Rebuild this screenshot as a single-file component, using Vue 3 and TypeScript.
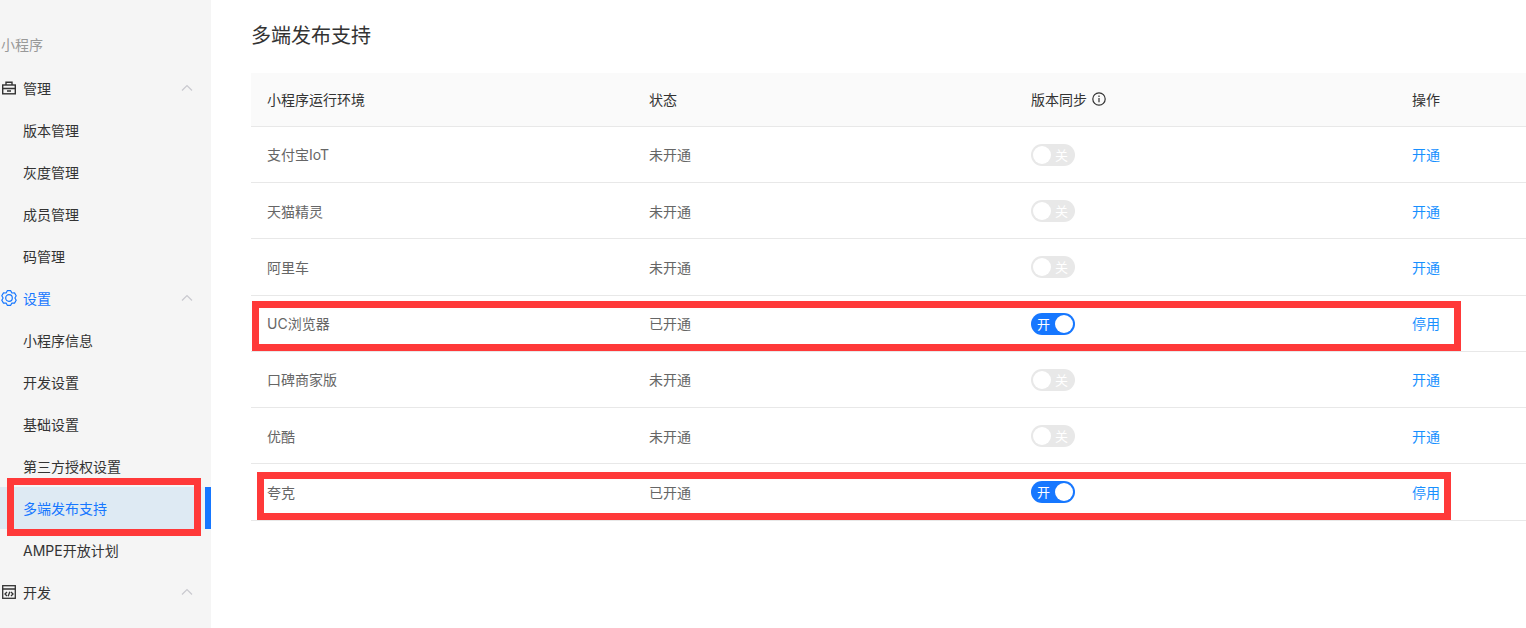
<template>
  <div class="page">
    <aside class="side">
      <div class="brand">小程序</div>
      <template v-for="g in groups" :key="g.name">
        <div class="group" :class="{ on: g.on }">
          <svg v-if="g.icon === 'box'" class="gi" viewBox="0 0 16 16" fill="none" stroke="currentColor" stroke-width="1.4">
            <path d="M5 5V2.300h6V5" />
            <rect x="1.700" y="5" width="12.600" height="8.800" />
            <path d="M1.700 8.500h12.600M6 11h4" />
          </svg>
          <svg v-else-if="g.icon === 'gear'" class="gi" viewBox="0 0 16 16" fill="none" stroke="currentColor" stroke-width="1.200">
            <path d="M6.300 .7h3.400l1.200 2.300 2.600-.1 1.700 2.900-1.300 2.200 1.300 2.200-1.700 2.900-2.600-.1-1.200 2.300H6.300l-1.200-2.300-2.600.1L.8 10.200 2.100 8 .8 5.800l1.700-2.900 2.600.1z" stroke-linejoin="round" />
            <circle cx="8" cy="8" r="3.300" />
          </svg>
          <svg v-else class="gi" viewBox="0 0 16 16" fill="none" stroke="currentColor" stroke-width="1.300">
            <rect x="1.700" y="1.700" width="12.600" height="12.600" />
            <path d="M1.700 5h12.600M6 8l-2 2 2 2M10 8l2 2-2 2M8.800 7.800l-1.600 4.400" />
          </svg>
          <span>{{ g.name }}</span>
          <svg class="arrow" viewBox="0 0 12 8" fill="none" stroke="currentColor" stroke-width="1.200">
            <path d="M1 6.500L6 1.500l5 5" />
          </svg>
        </div>
        <div v-for="s in g.items" :key="s" class="sub" :class="{ active: s === current }">{{ s }}</div>
      </template>
      <div class="mark-side"></div>
    </aside>
    <main class="main">
      <h1 class="title">多端发布支持</h1>
      <div class="table">
        <div class="row head">
          <div>小程序运行环境</div>
          <div>状态</div>
          <div class="sync">
            版本同步
            <svg class="info" viewBox="0 0 14 14" fill="none" stroke="currentColor" stroke-width="1.200">
              <circle cx="7" cy="7" r="6.200" />
              <path d="M7 6v4.200M7 3.600v1.300" />
            </svg>
          </div>
          <div>操作</div>
        </div>
        <div v-for="r in rows" :key="r.name" class="row">
          <div>{{ r.name }}</div>
          <div>{{ r.open ? '已开通' : '未开通' }}</div>
          <div>
            <span class="switch" :class="{ open: r.open }">
              <i class="knob"></i>
              <b class="lab">{{ r.open ? '开' : '关' }}</b>
            </span>
          </div>
          <div><a class="link">{{ r.open ? '停用' : '开通' }}</a></div>
        </div>
        <div class="mark mark-uc"></div>
        <div class="mark mark-quark"></div>
      </div>
    </main>
  </div>
</template>

<script setup lang="ts">
const current = '多端发布支持'

const groups = [
  { name: '管理', icon: 'box', on: false, items: ['版本管理', '灰度管理', '成员管理', '码管理'] },
  { name: '设置', icon: 'gear', on: true, items: ['小程序信息', '开发设置', '基础设置', '第三方授权设置', '多端发布支持', 'AMPE开放计划'] },
  { name: '开发', icon: 'code', on: false, items: [] as string[] },
]

const rows = [
  { name: '支付宝IoT', open: false },
  { name: '天猫精灵', open: false },
  { name: '阿里车', open: false },
  { name: 'UC浏览器', open: true },
  { name: '口碑商家版', open: false },
  { name: '优酷', open: false },
  { name: '夸克', open: true },
]
</script>

<style>
html, body {
  margin: 0;
  background: #fff;
  overflow: hidden;
}
</style>

<style scoped>
.page {
  display: flex;
  height: 628px;
  overflow: hidden;
  font-family: Inter, "Noto Sans CJK SC", sans-serif;
  font-size: 14px;
  color: #333;
}

.side {
  position: relative;
  width: 211px;
  flex-shrink: 0;
  background: #f5f5f5;
  padding-top: 24px;
  box-sizing: border-box;
}

.brand {
  height: 43px;
  line-height: 42px;
  color: #999;
  padding-left: 1px;
}

.group {
  display: flex;
  align-items: center;
  height: 42px;
  color: #333;
}

.group.on {
  color: #1677ff;
}

.gi {
  width: 16px;
  height: 16px;
  margin: 0 6px 0 1px;
}

.arrow {
  width: 12px;
  height: 8px;
  margin-left: auto;
  margin-right: 18px;
  color: #c9c9cf;
}

.sub {
  height: 42px;
  line-height: 44px;
  padding-left: 23px;
}

.sub.active {
  color: #1677ff;
  background: linear-gradient(to right, #deeaf3 201px, #eef2f5 201px);
  position: relative;
}

.sub.active::after {
  content: "";
  position: absolute;
  top: 0;
  bottom: 0;
  right: 0;
  width: 6px;
  background: #1677ff;
}

.mark-side {
  position: absolute;
  left: 7px;
  top: 478px;
  width: 194px;
  height: 58px;
  box-sizing: border-box;
  border: 7px solid #ff3939;
}

.main {
  flex: 1;
  min-width: 0;
  padding: 0 0 0 40px;
}

.title {
  margin: 0;
  height: 73px;
  line-height: 72px;
  font-size: 20px;
  font-weight: 400;
  color: #333;
}

.table {
  position: relative;
}

.row {
  display: grid;
  grid-template-columns: 382px 382px 381px 1fr;
  align-items: center;
  height: 56.250px;
  box-sizing: border-box;
  border-bottom: 1px solid #e8e8e8;
  color: #666;
}

.row > div {
  padding-left: 16px;
  padding-bottom: 0.600px;
}

.head {
  height: 53.950px;
  background: #fafafa;
  color: #333;
}

.sync {
  display: flex;
  align-items: center;
  gap: 5px;
}

.info {
  width: 14px;
  height: 14px;
}

.switch {
  position: relative;
  display: block;
  width: 44px;
  height: 22px;
  margin-top: 1.400px;
  border-radius: 11px;
  background: #e8e8e8;
}

.switch.open {
  background: #1677ff;
}

.knob {
  position: absolute;
  left: 2px;
  top: 2px;
  width: 18px;
  height: 18px;
  border-radius: 50%;
  background: #fff;
}

.open .knob {
  left: 24px;
}

.lab {
  position: absolute;
  left: 24px;
  top: 0;
  line-height: 22px;
  font-size: 13px;
  font-weight: 400;
  color: #fff;
}

.open .lab {
  left: 6px;
}

.link {
  color: #1890ff;
}

.mark {
  position: absolute;
  box-sizing: border-box;
  border: 7px solid #ff3939;
}

.mark-uc {
  left: 1px;
  top: 228px;
  width: 1209px;
  height: 50px;
}

.mark-quark {
  left: 6px;
  top: 399px;
  width: 1194px;
  height: 48px;
}
</style>
